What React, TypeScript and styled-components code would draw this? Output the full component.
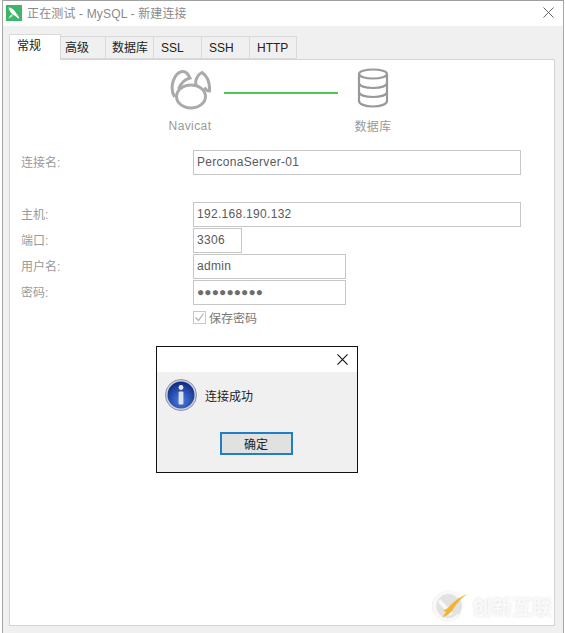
import React from "react";
import styled, { createGlobalStyle } from "styled-components";

const Global = createGlobalStyle`
  html, body { margin: 0; padding: 0; background: #fff; overflow: hidden; }
  * { box-sizing: border-box; }
`;
const FONT = `"Liberation Sans", "Noto Sans CJK SC", sans-serif`;

const Page = styled.div`
  position: relative;
  width: 566px;
  height: 633px;
  font-family: ${FONT};
  font-size: 12px;
  overflow: hidden;
  background: #fff;
`;
const Win = styled.div`
  width: 562px;
  height: 633px;
  margin-left: 2px;
  border-top: 1px solid #a0a0a0;
  border-left: 1px solid #a6a6a6;
  border-right: 1px solid #a6a6a6;
  background: #f0f0f0;
  display: flex;
  flex-direction: column;
`;
const TitleBar = styled.div`
  height: 25px;
  flex: none;
  background: #fff;
  display: flex;
  align-items: center;
  padding: 0 9px 2px 3px;
  gap: 5px;
`;
const TitleText = styled.div`
  flex: 1;
  color: #8a8a8a;
  font-size: 12px;
  letter-spacing: 0.15px;
`;
const Body = styled.div`
  flex: 1;
  padding: 7px 8px 7px 6px;
  display: flex;
  flex-direction: column;
`;
const Tabs = styled.div`
  display: flex;
  align-items: flex-end;
  height: 26px;
  flex: none;
  position: relative;
  z-index: 1;
`;
const Tab = styled.div<{ $w: number; $active?: boolean; $pad?: number }>`
  width: ${(p) => p.$w}px;
  height: ${(p) => (p.$active ? 26 : 23)}px;
  margin-bottom: ${(p) => (p.$active ? -1 : 0)}px;
  background: ${(p) => (p.$active ? "#fff" : "#f0f0f0")};
  border: 1px solid #d9d9d9;
  border-left-width: ${(p) => (p.$active ? 1 : 0)}px;
  border-bottom-width: ${(p) => (p.$active ? 0 : 1)}px;
  color: #222;
  font-size: 12px;
  line-height: 17px;
  padding: ${(p) => (p.$active ? "3px 0 0 7px" : `3px 0 0 ${p.$pad ?? 7}px`)};
  white-space: nowrap;
`;
const Panel = styled.div`
  flex: 1;
  background: #fff;
  border: 1px solid #d4d4d4;
  display: flex;
  flex-direction: column;
`;
const Flow = styled.div`
  display: flex;
  height: 84px;
  padding-top: 8px;
  flex: none;
`;
const FlowItem = styled.div<{ $w: number; $ml: number }>`
  width: ${(p) => p.$w}px;
  margin-left: ${(p) => p.$ml}px;
  display: flex;
  flex-direction: column;
  align-items: center;
  color: #9a9a9a;
  font-size: 12px;
  letter-spacing: 0.4px;
  gap: 9px;
`;
const Line = styled.div`
  width: 114px;
  height: 2px;
  background: #4fc850;
  margin: 24px 0 0 4px;
  flex: none;
`;
const Form = styled.div`
  display: flex;
  flex-direction: column;
  padding-left: 11px;
  margin-top: 6px;
`;
const Row = styled.div<{ $mt?: number }>`
  display: flex;
  align-items: center;
  margin-top: ${(p) => p.$mt ?? 1}px;
`;
const Label = styled.div`
  width: 172px;
  flex: none;
  color: #9a9a9a;
  font-size: 12px;
  padding-bottom: 2px;
`;
const Input = styled.div<{ $w: number }>`
  width: ${(p) => p.$w}px;
  height: 25px;
  border: 1px solid #c6c6c6;
  background: #fff;
  color: #5a5a5a;
  font-size: 12px;
  letter-spacing: 0.3px;
  display: flex;
  align-items: center;
  padding: 0 0 2px 3px;
`;
const Dots = styled.span`
  font-size: 12px;
  letter-spacing: 0.1px;
  color: #6e6e6e;
`;
const CheckRow = styled.div`
  display: flex;
  align-items: center;
  gap: 3px;
  margin: 4px 0 0 172px;
  color: #777;
  font-size: 12px;
`;
const CheckBox = styled.div`
  width: 13px;
  height: 13px;
  border: 1px solid #c8c8c8;
  display: flex;
  align-items: center;
  justify-content: center;
`;
const Dialog = styled.div`
  position: absolute;
  left: 156px;
  top: 346px;
  width: 202px;
  height: 127px;
  border: 1px solid #111;
  background: #f0f0f0;
  display: flex;
  flex-direction: column;
`;
const DialogTitle = styled.div`
  height: 25px;
  background: #fff;
  display: flex;
  justify-content: flex-end;
  align-items: center;
  padding-right: 9px;
  flex: none;
`;
const DialogMsg = styled.div`
  display: flex;
  align-items: center;
  gap: 8px;
  padding: 7px 0 0 8px;
  color: #222;
  font-size: 12px;
`;
const DialogFoot = styled.div`
  display: flex;
  justify-content: center;
  margin-top: 21px;
  padding-right: 2px;
`;
const OkButton = styled.div`
  width: 73px;
  height: 23px;
  border: 2px solid #1f7fc4;
  background: #e1e1e1;
  color: #222;
  font-size: 12px;
  display: flex;
  align-items: center;
  justify-content: center;
`;
const Watermark = styled.div`
  position: absolute;
  left: 431px;
  top: 589px;
  display: flex;
  align-items: center;
  gap: 4px;
  color: #f9f9f9;
  font-size: 20px;
  font-weight: 700;
  text-shadow: 0 0 3px #e2e2e2;
`;

const AppLogo = () => (
  <svg width="16" height="16" viewBox="0 0 19 19">
    <rect width="19" height="19" fill="#3fb56b" />
    <path d="M3 3c3 0 6 2 8 5 1 2 4 5 5 8-3 0-3-2-5-3-3-1-7-5-8-10z" fill="#fff" />
    <path d="M3 16c1-2 2-4 4-5l1 2c-2 1-3 2-5 3z" fill="#dff5e6" />
  </svg>
);
const CloseIcon = ({ size, color, sw }: { size: number; color: string; sw: number }) => (
  <svg width={size} height={size} viewBox="0 0 12 12">
    <path d="M.5.5l11 11M11.500.5l-11 11" stroke={color} strokeWidth={sw} fill="none" />
  </svg>
);
const NavicatLogo = () => (
  <svg width="42" height="42" viewBox="0 0 42 42" fill="none" stroke="#aaa" strokeWidth="3">
    <ellipse cx="22" cy="28.500" rx="14.500" ry="11.500" />
    <path d="M5.500 29C0 19 5 5 13 3.500c3-.5 6 2 8 6.500-4.500 1-9 5-11.500 11" />
    <path d="M27.500 18c-1-2-1-4-.5-6 1-3 3-6 6-7.500 5 3.500 8 10.500 7.500 18.500-2 0-4-1.500-5-3.500" />
  </svg>
);
const DbIcon = () => (
  <svg width="32" height="40" viewBox="0 0 32 40" fill="none" stroke="#999" strokeWidth="2.200">
    <ellipse cx="16" cy="6" rx="14" ry="4.500" />
    <path d="M2 6v27c0 3 6 5.500 14 5.500S30 36 30 33V6" />
    <path d="M2 15c0 3 6 5 14 5s14-2 14-5" />
    <path d="M2 24c0 3 6 5 14 5s14-2 14-5" />
  </svg>
);
const InfoIcon = () => (
  <svg width="32" height="32" viewBox="0 0 32 32">
    <defs>
      <radialGradient id="ig" cx="50%" cy="70%" r="65%">
        <stop offset="0%" stopColor="#4b80e4" />
        <stop offset="100%" stopColor="#132c88" />
      </radialGradient>
    </defs>
    <circle cx="16" cy="16" r="15.500" fill="#cfd3dc" stroke="#8c92a6" />
    <circle cx="16" cy="16" r="13.500" fill="url(#ig)" />
    <circle cx="16" cy="8.500" r="2.400" fill="#e8edf5" />
    <rect x="13.600" y="12.500" width="4.800" height="13" rx="1" fill="#dfe4ec" />
  </svg>
);
const Tick = () => (
  <svg width="11" height="11" viewBox="0 0 11 11">
    <path d="M1.500 5.500l3 3 5-7" stroke="#b0b0b0" strokeWidth="1.200" fill="none" />
  </svg>
);
const WmLogo = () => (
  <svg width="37" height="34" viewBox="0 0 37 34">
    <circle cx="16" cy="17" r="15" fill="#e2e2e2" />
    <path d="M28 8A14 14 0 1 0 28 26" fill="none" stroke="#f8f8f8" strokeWidth="4" />
    <path d="M9 10l13 14-3 3L7 13z" fill="#f8f8f8" />
    <path d="M11 28c5-1 9-4 12-9 3-5 8-11 14-14-7 2-14 7-19 13-2 2-4 3-6 3l3 2c-1 2-3 4-4 5z" fill="#f3b52e" />
  </svg>
);

export default function App() {
  return (
    <Page>
      <Global />
      <Win>
        <TitleBar>
          <AppLogo />
          <TitleText>正在测试 - MySQL - 新建连接</TitleText>
          <CloseIcon size={11} color="#555" sw={1} />
        </TitleBar>
        <Body>
          <Tabs>
            <Tab $w={52} $active>常规</Tab>
            <Tab $w={45} $pad={4}>高级</Tab>
            <Tab $w={48} $pad={6}>数据库</Tab>
            <Tab $w={48}>SSL</Tab>
            <Tab $w={48}>SSH</Tab>
            <Tab $w={47}>HTTP</Tab>
          </Tabs>
          <Panel>
            <Flow>
              <FlowItem $w={60} $ml={150}><NavicatLogo /><span>Navicat</span></FlowItem>
              <Line />
              <FlowItem $w={60} $ml={5}><DbIcon /><span>数据库</span></FlowItem>
            </Flow>
            <Form>
              <Row $mt={0}><Label>连接名:</Label><Input $w={328}>PerconaServer-01</Input></Row>
              <Row $mt={27}><Label>主机:</Label><Input $w={328}>192.168.190.132</Input></Row>
              <Row><Label>端口:</Label><Input $w={49}>3306</Input></Row>
              <Row><Label>用户名:</Label><Input $w={153}>admin</Input></Row>
              <Row><Label>密码:</Label><Input $w={153}><Dots>●●●●●●●●●</Dots></Input></Row>
              <CheckRow><CheckBox><Tick /></CheckBox>保存密码</CheckRow>
            </Form>
          </Panel>
        </Body>
      </Win>
      <Dialog>
        <DialogTitle><CloseIcon size={11} color="#111" sw={1.200} /></DialogTitle>
        <DialogMsg><InfoIcon />连接成功</DialogMsg>
        <DialogFoot><OkButton>确定</OkButton></DialogFoot>
      </Dialog>
      <Watermark><WmLogo />创新互联</Watermark>
    </Page>
  );
}
